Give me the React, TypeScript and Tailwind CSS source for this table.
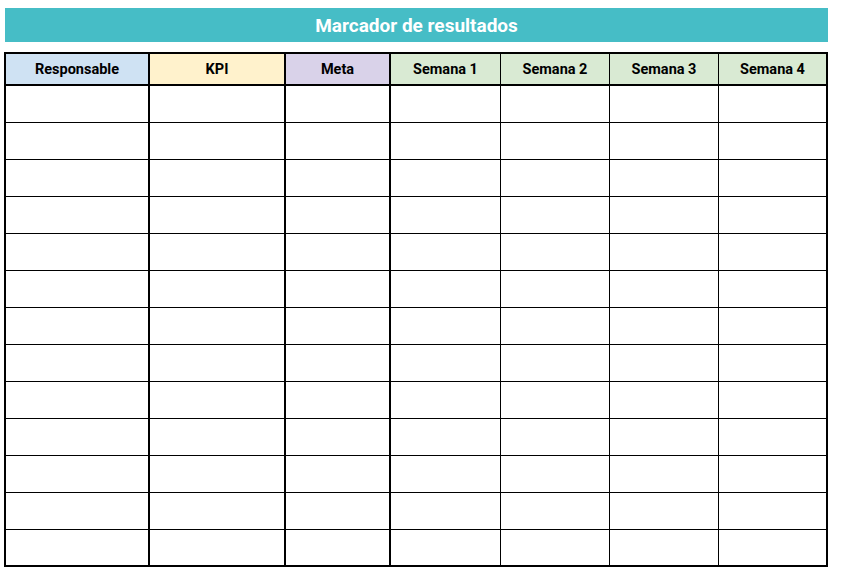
import React from 'react';

const columns = [
  { label: 'Responsable', bg: 'bg-[#cfe2f3]', w: 'border-r-2' },
  { label: 'KPI', bg: 'bg-[#fff2cc]', w: 'border-r-2' },
  { label: 'Meta', bg: 'bg-[#d9d2e9]', w: 'border-r-2' },
  { label: 'Semana 1', bg: 'bg-[#d9ead3]', w: 'border-r' },
  { label: 'Semana 2', bg: 'bg-[#d9ead3]', w: 'border-r' },
  { label: 'Semana 3', bg: 'bg-[#d9ead3]', w: 'border-r' },
  { label: 'Semana 4', bg: 'bg-[#d9ead3]', w: '' },
];

const ROWS = 13;

const App: React.FC = () => {
  return (
    <div className="w-[842px] h-[578px] bg-white font-['Roboto',sans-serif] pt-2">
      <div className="ml-[5px] w-[823px] h-[34px] pt-[2px] bg-[#46bdc6] flex items-center justify-center">
        <span className="text-white font-bold text-[19px]">Marcador de resultados</span>
      </div>

      <div className="mt-[10px] ml-[4px] w-[824px] border-2 border-black grid grid-cols-[144px_136px_105px_110px_109px_109px_107px]">
        {/* cabecera */}
        {columns.map((c) => (
          <div
            key={c.label}
            className={`h-[32px] pt-[2px] ${c.bg} ${c.w} border-b-2 border-black flex items-center justify-center text-[14.5px] font-bold text-black`}
          >
            {c.label}
          </div>
        ))}

        {Array.from({ length: ROWS }).map((_, r) =>
          columns.map((c) => (
            <div
              key={`${r}-${c.label}`}
              className={`${r === ROWS - 1 ? 'h-[35px]' : 'h-[37px] border-b'} ${c.w} border-black bg-white`}
            />
          ))
        )}
      </div>
    </div>
  );
};

export default App;
